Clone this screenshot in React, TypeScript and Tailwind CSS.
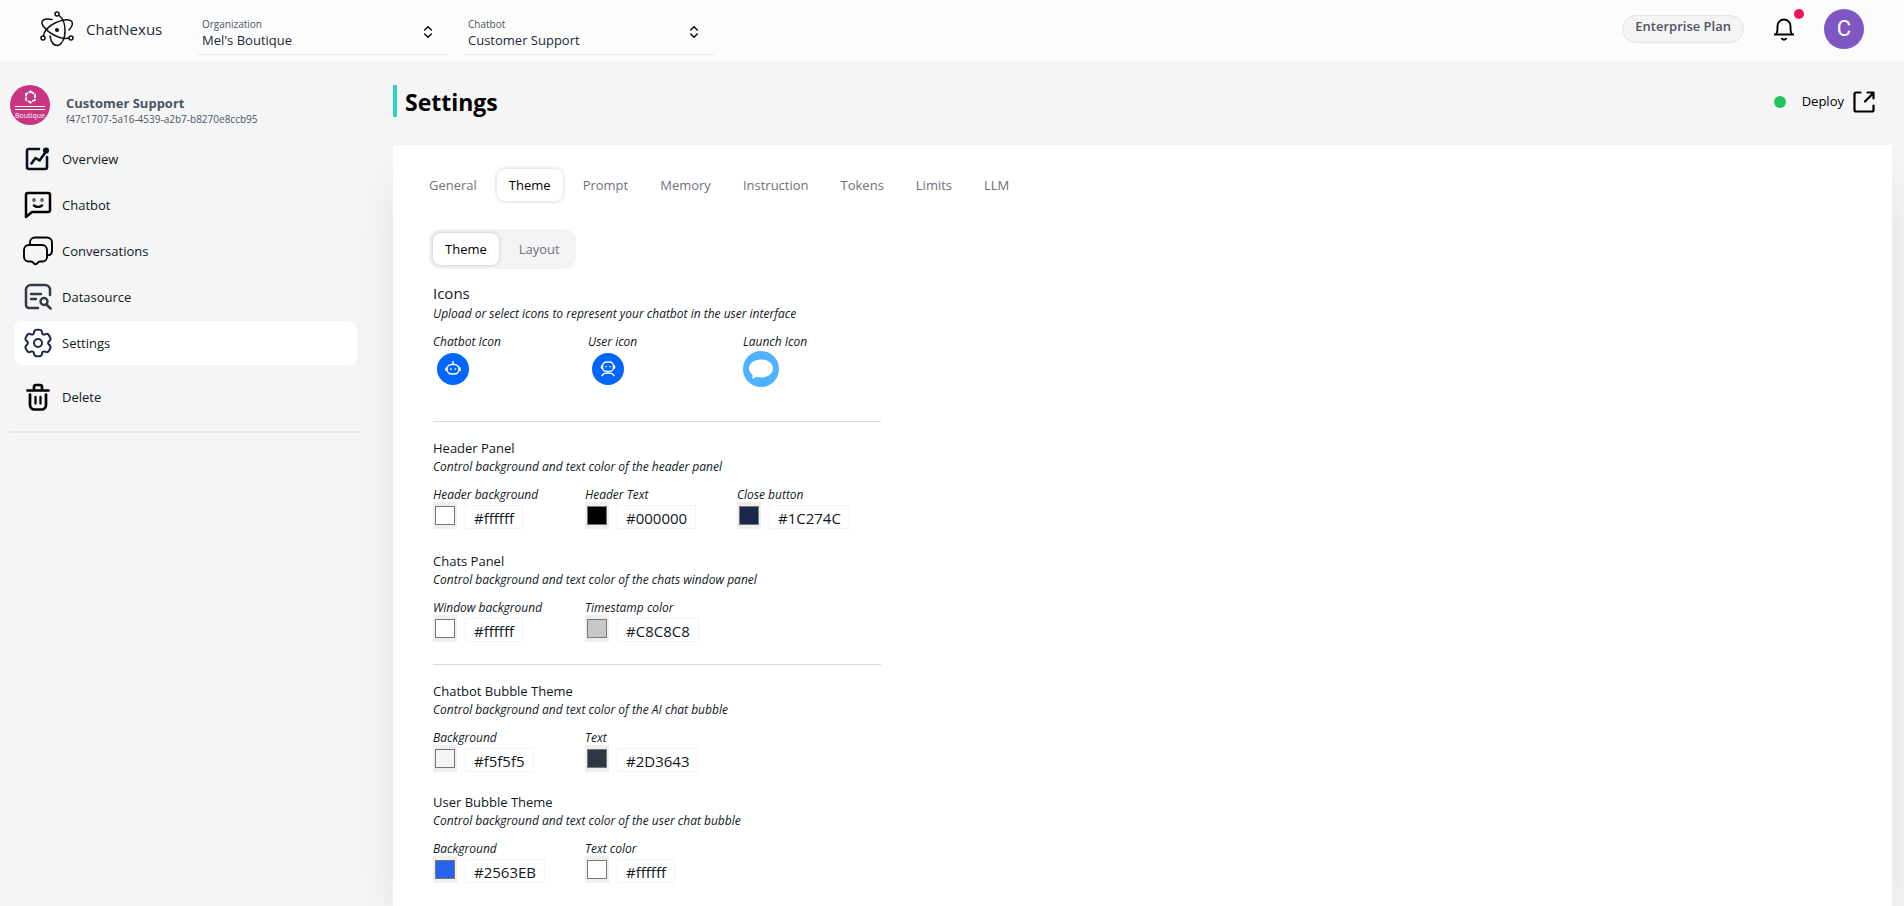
import { useState } from "react";
import { ChevronsUpDown } from "lucide-react";
import clsx from "clsx";

interface ColorFieldData {
  label: string;
  value: string;
}

interface PanelData {
  title: string;
  description: string;
  fields: ColorFieldData[];
}

const headerPanels: PanelData[] = [
  {
    title: "Header Panel",
    description: "Control background and text color of the header panel",
    fields: [
      { label: "Header background", value: "#ffffff" },
      { label: "Header Text", value: "#000000" },
      { label: "Close button", value: "#1C274C" },
    ],
  },
  {
    title: "Chats Panel",
    description: "Control background and text color of the chats window panel",
    fields: [
      { label: "Window background", value: "#ffffff" },
      { label: "Timestamp color", value: "#C8C8C8" },
    ],
  },
];

const bubblePanels: PanelData[] = [
  {
    title: "Chatbot Bubble Theme",
    description: "Control background and text color of the AI chat bubble",
    fields: [
      { label: "Background", value: "#f5f5f5" },
      { label: "Text", value: "#2D3643" },
    ],
  },
  {
    title: "User Bubble Theme",
    description: "Control background and text color of the user chat bubble",
    fields: [
      { label: "Background", value: "#2563EB" },
      { label: "Text color", value: "#ffffff" },
    ],
  },
];

const settingsTabs = ["General", "Theme", "Prompt", "Memory", "Instruction", "Tokens", "Limits", "LLM"];

function LogoIcon() {
  return (
    <svg viewBox="0 0 34 36" className="h-9 w-[34px]" fill="none" stroke="#111" strokeWidth="1.5" strokeLinecap="round">
      <circle cx="17" cy="3" r="2" />
      <circle cx="3" cy="27" r="2" />
      <circle cx="31" cy="27" r="2" />
      <circle cx="17" cy="19" r="1.3" fill="#111" />
      <path d="M19 4.500c3.500 2.500 6 8 6 15 0 4-.8 8-2.200 10.500" />
      <path d="M3.500 25c.5-5 5.500-10 11.500-13 3-1.500 6-2.500 9-3 4-.6 7 .1 8 2 1 2-.3 5-3 8" />
      <path d="M12 8.500C7.500 7.500 3.500 8 2.300 10c-1.800 3.200 3.700 9.700 10.700 13.500 6 3.300 12.500 4.500 16 3.500" />
      <path d="M10 25c1 5.500 3.700 9.500 7 9.500 2 0 3.800-1.300 5-3.500" />
    </svg>
  );
}

function OverviewIcon() {
  return (
    <svg viewBox="0 0 28 28" className="size-7" fill="none" stroke="#0b1020" strokeWidth="2.600" strokeLinecap="round" strokeLinejoin="round">
      <path d="M15 4H5a2 2 0 0 0-2 2v16a2 2 0 0 0 2 2h16a2 2 0 0 0 2-2V12" />
      <path d="M7.500 18.500 11.500 13l4 2.500 5.500-7.500" />
      <circle cx="22" cy="5.500" r="1.800" fill="#0b1020" />
    </svg>
  );
}

function ChatbotIcon() {
  return (
    <svg viewBox="0 0 28 28" className="size-7" fill="none" stroke="#000" strokeWidth="2.500" strokeLinecap="round" strokeLinejoin="round">
      <path d="M2 26V4a2 2 0 0 1 2-2h20a2 2 0 0 1 2 2v15a2 2 0 0 1-2 2H8z" />
      <path d="M10 14.500c2.200 1.700 5.800 1.700 8 0" />
      <circle cx="10" cy="9" r=".4" fill="#000" />
      <circle cx="18" cy="9" r=".4" fill="#000" />
    </svg>
  );
}

function ConversationsIcon() {
  return (
    <svg viewBox="0 0 30 30" className="size-[30px]" fill="none" stroke="#000" strokeWidth="1.900" strokeLinejoin="round">
      <path d="M7 8V6.500A5 5 0 0 1 12 1.500h12a5 5 0 0 1 5 5v8c0 3-2 5-5 5" />
      <path d="M6 9h13a5 5 0 0 1 5 5v7a4.500 4.500 0 0 1-4.500 4.500H17c-1.500 0-2 1-3 2-.8.800-2.200.800-3 0-1-1-1.500-2-3-2H5.500A4.500 4.500 0 0 1 1 21v-7a5 5 0 0 1 5-5z" />
    </svg>
  );
}

function DatasourceIcon() {
  return (
    <svg viewBox="0 0 28 28" className="size-7" fill="none" stroke="#343a46" strokeWidth="2.500" strokeLinecap="round" strokeLinejoin="round">
      <path d="M14 25H5a3 3 0 0 1-3-3V7a5 5 0 0 1 5-5h14a5 5 0 0 1 5 5v5" />
      <path d="M7 11h10M7 16h5" />
      <circle cx="20" cy="18.500" r="3.500" />
      <path d="m22.500 21.500 4 4" />
    </svg>
  );
}

function SettingsIcon() {
  return (
    <svg viewBox="0 0 24 24" className="size-8" fill="none" stroke="#1C274C" strokeWidth="1.500">
      <circle cx="12" cy="12" r="3" />
      <path d="M13.765 2.152C13.398 2 12.932 2 12 2s-1.398 0-1.765.152a2 2 0 0 0-1.083 1.083c-.092.223-.129.484-.143.863a1.617 1.617 0 0 1-.79 1.353 1.617 1.617 0 0 1-1.567.008c-.336-.178-.579-.276-.82-.308a2 2 0 0 0-1.478.396C4.040 5.790 3.806 6.193 3.340 7c-.466.807-.7 1.210-.751 1.605a2 2 0 0 0 .396 1.479c.148.192.355.353.676.555.473.297.777.803.777 1.361 0 .558-.304 1.064-.777 1.361-.321.202-.529.363-.676.555a2 2 0 0 0-.396 1.479c.052.394.285.798.75 1.605.467.807.7 1.210 1.015 1.453a2 2 0 0 0 1.479.396c.24-.032.483-.13.819-.308a1.617 1.617 0 0 1 1.567.008c.483.280.770.795.790 1.353.014.379.050.640.143.863a2 2 0 0 0 1.083 1.083C10.602 22 11.068 22 12 22s1.398 0 1.765-.152a2 2 0 0 0 1.083-1.083c.092-.223.129-.483.143-.863.020-.558.307-1.074.790-1.353a1.617 1.617 0 0 1 1.567-.008c.336.178.579.276.819.308a2 2 0 0 0 1.479-.396c.315-.242.548-.646 1.014-1.453.466-.807.700-1.210.751-1.605a2 2 0 0 0-.396-1.479c-.148-.192-.355-.353-.676-.555A1.617 1.617 0 0 1 19.562 12c0-.558.304-1.064.777-1.361.321-.202.529-.363.676-.555a2 2 0 0 0 .396-1.479c-.052-.394-.285-.798-.750-1.605-.467-.807-.700-1.210-1.015-1.453a2 2 0 0 0-1.479-.396c-.240.032-.483.130-.820.308a1.617 1.617 0 0 1-1.566-.008 1.617 1.617 0 0 1-.790-1.353c-.014-.380-.050-.640-.143-.863a2 2 0 0 0-1.083-1.083Z" />
    </svg>
  );
}

function DeleteIcon() {
  return (
    <svg viewBox="0 0 28 28" className="size-7" fill="none" stroke="#000" strokeWidth="2.700" strokeLinecap="round" strokeLinejoin="round">
      <path d="M3.500 7.500h21M10 7V4a2 2 0 0 1 2-2h4a2 2 0 0 1 2 2v3" />
      <path d="M6 11.500V22a4.500 4.500 0 0 0 4.500 4.500h7a4.500 4.500 0 0 0 4.500-4.500V11.500" />
      <path d="M11.500 14v6.500M16.500 14v6.500" strokeWidth="2.300" />
    </svg>
  );
}

function BellIcon() {
  return (
    <svg viewBox="0 0 24 24" className="size-6" fill="none" stroke="#000" strokeWidth="1.900">
      <path d="M2 17.500h20M4 17.500c1-1.500 1.500-3 1.500-6V9a6.500 6.500 0 0 1 13 0v2.500c0 3 .5 4.500 1.500 6" />
      <path d="M9.500 21a2.700 2.700 0 0 0 5 0" />
    </svg>
  );
}

function DeployIcon() {
  return (
    <svg viewBox="0 0 24 24" className="size-6" fill="none" stroke="#000" strokeWidth="2.200" strokeLinecap="round" strokeLinejoin="round">
      <path d="M8.500 2.500H4A1.500 1.500 0 0 0 2.500 4v16A1.500 1.500 0 0 0 4 21.500h16a1.500 1.500 0 0 0 1.500-1.500v-4.500" />
      <path d="M13 11.500 21.500 3M15.500 2.500h6v6" />
    </svg>
  );
}

function BoutiqueAvatar() {
  return (
    <svg viewBox="0 0 40 40" className="size-10 shrink-0 rounded-full bg-[#c83581]" fill="none" stroke="#fff">
      <path d="m20.500 6.500 4.500 2.700v5.600l-4.500 2.700-4.500-2.700V9.200z" strokeWidth="2" strokeDasharray="4 1" />
      <path d="M5 21.500h30M5 24.500h30" strokeWidth="1" />
      <text x="20" y="33" textAnchor="middle" fontSize="7" fill="#fff" stroke="none">
        Boutique
      </text>
    </svg>
  );
}

function BotBadge() {
  return (
    <svg viewBox="0 0 32 32" className="size-8" fill="none" stroke="#fff" strokeWidth="1.500" strokeLinecap="round">
      <circle cx="16" cy="16" r="16" fill="#0066ff" stroke="none" />
      <rect x="10" y="11.500" width="12" height="9.500" rx="4.700" />
      <path d="M16 11V8.500M9 15v2.500M23 15v2.500" />
      <circle cx="13.800" cy="16" r=".5" fill="#fff" strokeWidth=".6" />
      <circle cx="18.200" cy="16" r=".5" fill="#fff" strokeWidth=".6" />
    </svg>
  );
}

function UserBadge() {
  return (
    <svg viewBox="0 0 32 32" className="size-8" fill="none" stroke="#fff" strokeWidth="1.500" strokeLinecap="round">
      <circle cx="16" cy="16" r="16" fill="#0066ff" stroke="none" />
      <rect x="10.500" y="9" width="11" height="9.500" rx="4" />
      <path d="M9.500 13v2M22.500 13v2M10 22.500c.8-1.500 2-2.200 3.500-2.200h5c1.500 0 2.700.7 3.500 2.200" />
      <circle cx="14" cy="13.500" r=".5" fill="#fff" strokeWidth=".6" />
      <circle cx="18" cy="13.500" r=".5" fill="#fff" strokeWidth=".6" />
    </svg>
  );
}

function LaunchBadge() {
  return (
    <svg viewBox="0 0 36 36" className="size-9">
      <circle cx="18" cy="18" r="18" fill="#4fb1ff" />
      <path d="M18 8.500c6.800 0 12 3.900 12 9s-5.200 9-12 9c-1.700 0-3.200-.2-4.600-.700C12 27 10.500 27.600 9 27.700c.6-1.200.8-2.500.6-3.800C7.400 22.300 6 20.200 6 17.500c0-5.100 5.200-9 12-9z" fill="#fff" />
    </svg>
  );
}

const navItems = [
  { label: "Overview", icon: <OverviewIcon /> },
  { label: "Chatbot", icon: <ChatbotIcon /> },
  { label: "Conversations", icon: <ConversationsIcon /> },
  { label: "Datasource", icon: <DatasourceIcon /> },
  { label: "Settings", icon: <SettingsIcon />, active: true },
];

function HeaderSelect({ id, label, value }: { id: string; label: string; value: string }) {
  return (
    <div className="flex w-[250px] items-start border-b border-gray-200 pr-3 pb-1 pl-1">
      <div className="flex flex-1 flex-col">
        <label htmlFor={id} className="text-[10px] leading-3 text-gray-600">
          {label}
        </label>
        <select id={id} className="h-5 appearance-none text-[13px] leading-5 text-gray-800">
          <option>{value}</option>
        </select>
      </div>
      <ChevronsUpDown className="mt-1.5 size-4 text-black" strokeWidth={2} />
    </div>
  );
}

function ColorField({ id, label, value }: ColorFieldData & { id: string }) {
  const [color, setColor] = useState(value);

  return (
    <div className="flex w-[152px] shrink-0 flex-col">
      <label htmlFor={id} className="text-xs leading-[14px] italic">
        {label}
      </label>
      <div className="flex items-end gap-2">
        <input
          id={id}
          type="color"
          value={color.toLowerCase()}
          onChange={(e) => setColor(e.target.value)}
          className="h-[27px] w-6 bg-[#efefef]"
        />
        <span className="h-6 border border-gray-100 px-2 text-[15px] leading-6">{color}</span>
      </div>
    </div>
  );
}

function ColorPanel({ panel }: { panel: PanelData }) {
  return (
    <section>
      <h3 className="text-[13px] leading-5">{panel.title}</h3>
      <p className="text-xs leading-[18px] italic">{panel.description}</p>
      <div className="mt-3 flex">
        {panel.fields.map((field) => (
          <ColorField key={field.label} id={`${panel.title}-${field.label}`} {...field} />
        ))}
      </div>
    </section>
  );
}

function TabButton({ label, active, onClick }: { label: string; active: boolean; onClick: () => void }) {
  return (
    <button
      type="button"
      onClick={onClick}
      className={clsx(
        "h-8 rounded-lg px-3 pt-0.5 text-[13px]",
        active ? "bg-white text-black shadow-[0_0_4px_rgba(0,0,0,0.2)]" : "text-zinc-500"
      )}
    >
      {label}
    </button>
  );
}

export default function App() {
  const [tab, setTab] = useState("Theme");
  const [view, setView] = useState("Theme");

  return (
    <div className="min-h-screen overflow-hidden bg-[#f5f5f5] font-['Open_Sans',sans-serif] text-[#11181c]">
      {/* Top bar */}
      <header className="flex h-[61px] items-center justify-between bg-[#fcfcfc] px-10 pb-1">
        <div className="flex items-center">
          <LogoIcon />
          <span className="ml-3 w-28 pt-0.5 text-[15px] text-gray-800">ChatNexus</span>
          <div className="flex gap-4 pt-4">
            <HeaderSelect id="organization" label="Organization" value="Mel's Boutique" />
            <HeaderSelect id="chatbot" label="Chatbot" value="Customer Support" />
          </div>
        </div>
        <div className="flex items-center">
          <span className="mr-7 h-7 rounded-full border border-zinc-200 bg-zinc-100 px-3 text-[13px] leading-5 font-semibold text-zinc-600">
            Enterprise Plan
          </span>
          <button type="button" aria-label="Notifications" className="relative">
            <BellIcon />
            <span className="absolute -top-2 -right-2 size-2.5 rounded-full bg-[#f31260]" />
          </button>
          <button type="button" className="ml-7 size-10 rounded-full bg-[#7e57c2] font-['Roboto',sans-serif] text-[22px] text-white">
            C
          </button>
        </div>
      </header>

      <div className="flex">
        {/* Sidebar */}
        <aside className="w-[361px] shrink-0 pt-6 pl-2.5">
          <div className="flex gap-4">
            <BoutiqueAvatar />
            <div className="pt-2">
              <h2 className="text-[13px] leading-5 font-bold text-gray-600">Customer Support</h2>
              <p className="text-[10px] leading-3 text-gray-600">f47c1707-5a16-4539-a2b7-b8270e8ccb95</p>
            </div>
          </div>
          <nav className="mt-3 flex flex-col gap-0.5 px-1">
            {navItems.map((item) => (
              <a
                key={item.label}
                href="#"
                className={clsx("flex h-11 items-center gap-2 rounded-lg pl-2 text-[13px]", item.active && "bg-white")}
              >
                <span className="flex w-8 justify-center">{item.icon}</span>
                <span className="pt-0.5">{item.label}</span>
              </a>
            ))}
            <a href="#" className="mt-2 flex h-11 items-center gap-2 rounded-lg pl-2 text-[13px]">
              <span className="flex w-8 justify-center">
                <DeleteIcon />
              </span>
              <span className="pt-0.5">Delete</span>
            </a>
          </nav>
          <hr className="mt-3 border-t-2 border-gray-200" />
        </aside>

        {/* Main content */}
        <main className="flex min-w-0 flex-1 flex-col pt-6 pr-3 pl-8">
          <div className="flex h-8 items-center justify-between">
            <h1 className="flex h-8 items-center border-l-4 border-[#2dd4bf] pt-0.5 pl-2 text-[23px] font-bold text-black">Settings</h1>
            <div className="flex items-center pt-0.5 pr-4">
              <span className="mr-4 size-3 rounded-full bg-[#22c55e]" />
              <a href="#" className="flex items-center gap-2 text-[13px] text-black">
                Deploy
                <DeployIcon />
              </a>
            </div>
          </div>

          <div className="mt-7 min-h-[761px] bg-white px-9 pt-6 shadow-[0_25px_50px_-12px_rgba(0,0,0,0.12)]">
            <div className="-ml-3 flex gap-2">
              {settingsTabs.map((label) => (
                <TabButton key={label} label={label} active={tab === label} onClick={() => setTab(label)} />
              ))}
            </div>

            <div className="mt-7 inline-flex h-10 gap-2 rounded-xl bg-zinc-100 p-1">
              {["Theme", "Layout"].map((label) => (
                <TabButton key={label} label={label} active={view === label} onClick={() => setView(label)} />
              ))}
            </div>

            <div className="mt-3 w-[452px] pl-1">
              <section>
                <h3 className="text-[15px] leading-6">Icons</h3>
                <p className="text-xs leading-[18px] italic">Upload or select icons to represent your chatbot in the user interface</p>
                <div className="mt-3 flex text-xs leading-[14px] italic">
                  <div className="w-[155px]">
                    Chatbot Icon
                    <button type="button" aria-label="Chatbot Icon" className="mt-0.5 ml-1 flex h-9 items-center">
                      <BotBadge />
                    </button>
                  </div>
                  <div className="w-[155px]">
                    User icon
                    <button type="button" aria-label="User icon" className="mt-0.5 ml-1 flex h-9 items-center">
                      <UserBadge />
                    </button>
                  </div>
                  <div>
                    Launch Icon
                    <button type="button" aria-label="Launch Icon" className="mt-0.5 flex h-9 items-center">
                      <LaunchBadge />
                    </button>
                  </div>
                </div>
              </section>

              <hr className="mt-[34px] mb-4 border-[#dbdbdb]" />
              <div className="flex flex-col gap-[22px]">
                {headerPanels.map((panel) => (
                  <ColorPanel key={panel.title} panel={panel} />
                ))}
              </div>
              <hr className="mt-[22px] mb-4 border-[#dbdbdb]" />
              <div className="flex flex-col gap-5">
                {bubblePanels.map((panel) => (
                  <ColorPanel key={panel.title} panel={panel} />
                ))}
              </div>
            </div>
          </div>
        </main>
      </div>
    </div>
  );
}
